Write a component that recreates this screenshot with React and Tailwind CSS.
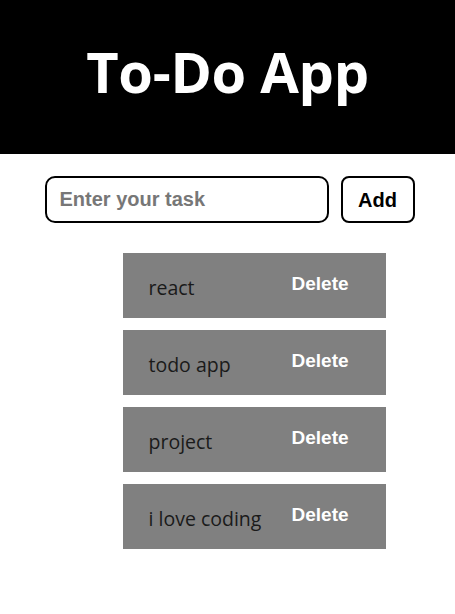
const tasks = ['react', 'todo app', 'project', 'i love coding']

const Header = () => {
  return (
    <div className="bg-black h-[154px] flex items-center justify-center">
      <h1 className="text-white font-bold text-[56px] leading-none font-['Open_Sans',sans-serif] tracking-[-0.3px] -mt-[12px]">
        To-Do App
      </h1>
    </div>
  )
}

const TaskInput = () => {
  return (
    <div className="flex justify-center gap-3 mt-[22px] pl-[4px]">
      <input
        type="text"
        placeholder="Enter your task"
        className="w-[284px] h-[47px] border-2 border-black rounded-[10px] px-[13px] text-[20px] font-bold font-['Liberation_Sans',sans-serif] placeholder:text-[#777]"
      />
      <button className="w-[74px] h-[47px] border-2 border-black rounded-[8px] text-[20px] font-bold font-['Liberation_Sans',sans-serif]">
        Add
      </button>
    </div>
  )
}

const TaskItem = ({ text }) => {
  return (
    <div className="bg-[#808080] w-[263px] h-[65px] flex items-center pl-[26px]">
      <span className="w-[143px] text-[19.5px] text-[#1a1a1a] font-['Open_Sans',sans-serif] mt-[4px]">{text}</span>
      <button className="text-white font-bold text-[19px] font-['Liberation_Sans',sans-serif] -mt-[3px]">
        Delete
      </button>
    </div>
  )
}

const App = () => {
  return (
    <div className="min-h-[614px] bg-white">
      <Header />
      <TaskInput />
      <div className="flex flex-col items-center gap-[12px] mt-[30px] pl-[53px]">
        {tasks.map((t) => (
          <TaskItem key={t} text={t} />
        ))}
      </div>
    </div>
  )
}

export default App
